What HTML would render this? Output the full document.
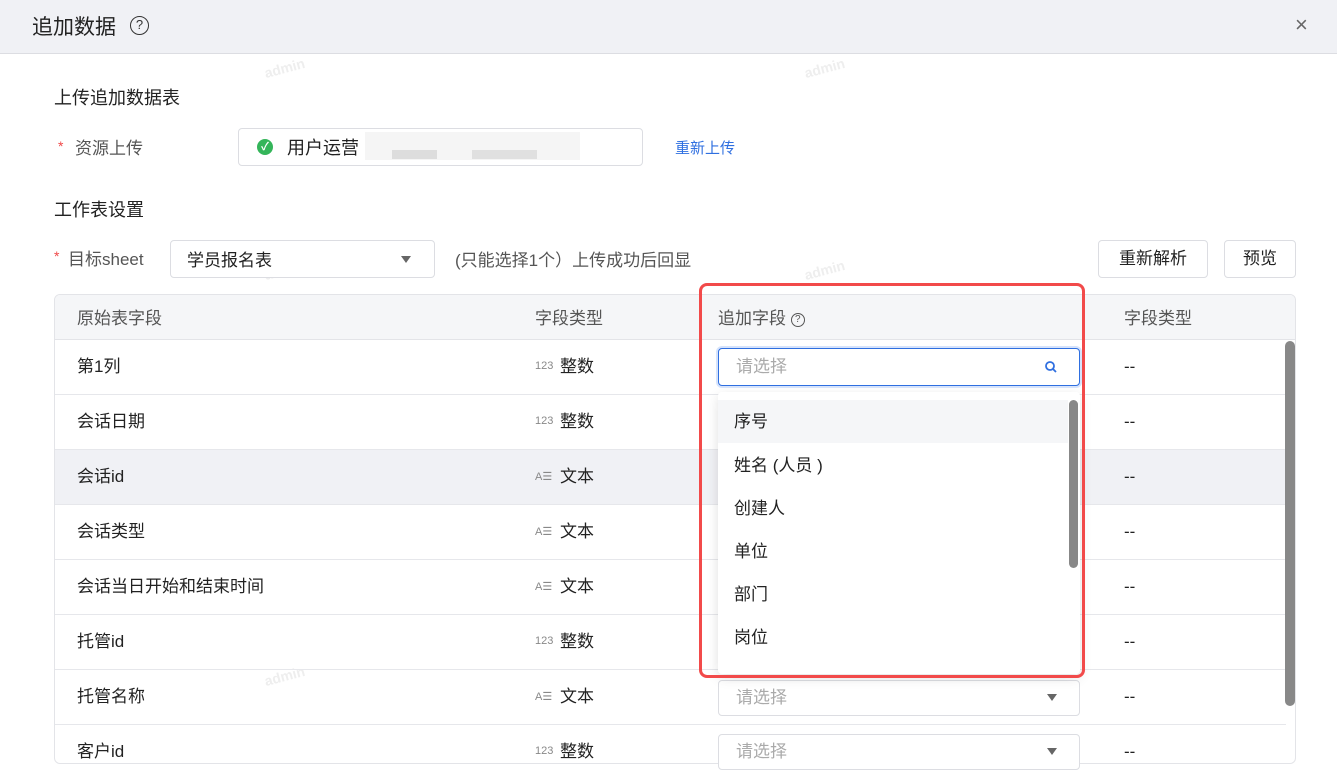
<!DOCTYPE html>
<html><head><meta charset="utf-8"><style>
*{box-sizing:border-box;margin:0;padding:0}
body{width:1337px;height:759px;overflow:hidden;background:#fff;font-family:"Liberation Sans","Noto Sans CJK SC",sans-serif;color:#222;position:relative}
.a{position:absolute;white-space:nowrap}
.hdr{left:0;top:0;width:1337px;height:54px;background:#f0f1f5;border-bottom:1px solid #dcdde2}
.lbl{font-size:17px;color:#555}
.star{color:#f04848;font-size:14px}
.box{border:1px solid #dcdde2;border-radius:4px;background:#fff}
.btn{border:1px solid #dcdde2;border-radius:4px;background:#fff;font-size:17px;color:#222;text-align:center;line-height:36px}
.tbl{left:54px;top:294px;width:1242px;height:470px;border:1px solid #e3e4e8;border-radius:6px;overflow:hidden}
.th{position:absolute;left:0;top:0;width:100%;height:45px;background:#f5f6f8;border-bottom:1px solid #e3e4e8;font-size:17px;color:#555}
.row{position:absolute;left:0;width:1231px;height:55px;border-bottom:1px solid #e6e7eb;font-size:17px}
.row span{position:absolute;top:12px}
.row span.ti{font-size:11px;color:#888;top:20px}
.row span.d{top:17px}
.sel{border:1px solid #dcdde2;border-radius:4px;background:#fff;font-size:17px;color:#aaa;padding-left:17px;line-height:34px}
.tri{position:absolute;width:0;height:0;border-left:5px solid transparent;border-right:5px solid transparent;border-top:7px solid #666}
.wm{font-size:14px;color:#eee;transform:rotate(-15deg);font-weight:bold}
.it{position:absolute;left:16px;font-size:17px;color:#222}
</style></head><body>
<div class="a hdr"></div>
<div class="a" style="left:32px;top:11px;font-size:21px;color:#222">追加数据</div>
<div class="a" style="left:130px;top:16px;width:19px;height:19px;border:1.6px solid #333;border-radius:50%;font-size:13px;text-align:center;line-height:16px;color:#333">?</div>
<div class="a" style="left:1295px;top:12px;font-size:22px;color:#666">×</div>

<div class="a wm" style="left:264px;top:60px">admin</div>
<div class="a wm" style="left:804px;top:60px">admin</div>
<div class="a wm" style="left:264px;top:262px">admin</div>
<div class="a wm" style="left:804px;top:262px">admin</div>
<div class="a wm" style="left:264px;top:466px">admin</div>
<div class="a wm" style="left:264px;top:668px">admin</div>

<div class="a" style="left:54px;top:84px;font-size:18px">上传追加数据表</div>
<div class="a star" style="left:58px;top:138px">*</div>
<div class="a lbl" style="left:75px;top:134px">资源上传</div>
<div class="a box" style="left:238px;top:128px;width:405px;height:38px"></div>
<div class="a" style="left:257px;top:139px;width:16px;height:16px;border-radius:50%;background:#34b55a;color:#fff;font-size:11px;text-align:center;line-height:16px;font-weight:bold">✓</div>
<div class="a" style="left:287px;top:134px;font-size:18px">用户运营</div>
<div class="a" style="left:365px;top:132px;width:215px;height:28px;background:#f5f5f5"></div>
<div class="a" style="left:392px;top:150px;width:45px;height:9px;background:#ddd"></div>
<div class="a" style="left:472px;top:150px;width:65px;height:9px;background:#e0e0e0"></div>
<div class="a" style="left:675px;top:137px;font-size:15px;color:#2f6fe0">重新上传</div>

<div class="a" style="left:54px;top:196px;font-size:18px">工作表设置</div>
<div class="a star" style="left:54px;top:248px">*</div>
<div class="a lbl" style="left:68px;top:245px">目标sheet</div>
<div class="a box" style="left:170px;top:240px;width:265px;height:38px"></div>
<div class="a" style="left:187px;top:246px;font-size:17px">学员报名表</div>
<div class="tri" style="left:401px;top:256px"></div>
<div class="a" style="left:455px;top:246px;font-size:17px;color:#555">(只能选择1个）上传成功后回显</div>
<div class="a btn" style="left:1098px;top:240px;width:110px;height:38px">重新解析</div>
<div class="a btn" style="left:1224px;top:240px;width:72px;height:38px">预览</div>

<div class="a tbl">
 <div class="th"><span class="a" style="left:22px;top:9px">原始表字段</span><span class="a" style="left:480px;top:9px">字段类型</span><span class="a" style="left:663px;top:9px">追加字段 <span style="display:inline-block;width:14px;height:14px;border:1.3px solid #555;border-radius:50%;font-size:10px;text-align:center;line-height:12px;vertical-align:2px">?</span></span><span class="a" style="left:1069px;top:9px">字段类型</span></div>
 <div class="row" style="top:45px"><span style="left:22px">第1列</span><span class="ti" style="left:480px">123</span><span style="left:505px">整数</span><span class="d" style="left:1069px">--</span></div>
 <div class="row" style="top:100px"><span style="left:22px">会话日期</span><span class="ti" style="left:480px">123</span><span style="left:505px">整数</span><span class="d" style="left:1069px">--</span></div>
 <div class="row" style="top:155px;background:#f0f1f5"><span style="left:22px">会话id</span><span class="ti" style="left:480px">A☰</span><span style="left:505px">文本</span><span class="d" style="left:1069px">--</span></div>
 <div class="row" style="top:210px"><span style="left:22px">会话类型</span><span class="ti" style="left:480px">A☰</span><span style="left:505px">文本</span><span class="d" style="left:1069px">--</span></div>
 <div class="row" style="top:265px"><span style="left:22px">会话当日开始和结束时间</span><span class="ti" style="left:480px">A☰</span><span style="left:505px">文本</span><span class="d" style="left:1069px">--</span></div>
 <div class="row" style="top:320px"><span style="left:22px">托管id</span><span class="ti" style="left:480px">123</span><span style="left:505px">整数</span><span class="d" style="left:1069px">--</span></div>
 <div class="row" style="top:375px"><span style="left:22px">托管名称</span><span class="ti" style="left:480px">A☰</span><span style="left:505px">文本</span><span class="d" style="left:1069px">--</span></div>
 <div class="row" style="top:430px"><span style="left:22px">客户id</span><span class="ti" style="left:480px">123</span><span style="left:505px">整数</span><span class="d" style="left:1069px">--</span></div>
 <div class="a" style="left:1230px;top:46px;width:10px;height:365px;background:#888;border-radius:5px"></div>
</div>

<div class="a sel" style="left:718px;top:680px;width:362px;height:36px">请选择</div>
<div class="tri" style="left:1047px;top:694px"></div>
<div class="a sel" style="left:718px;top:734px;width:362px;height:36px">请选择</div>
<div class="tri" style="left:1047px;top:748px"></div>

<div class="a" style="left:718px;top:392px;width:362px;height:282px;background:#fff;box-shadow:0 4px 12px rgba(0,0,0,.12);border-radius:4px;overflow:hidden">
 <div class="a" style="left:0;top:8px;width:350px;height:43px;background:#f5f6f8"></div>
 <div class="it" style="top:15px">序号</div>
 <div class="it" style="top:59px">姓名 (人员 )</div>
 <div class="it" style="top:102px">创建人</div>
 <div class="it" style="top:145px">单位</div>
 <div class="it" style="top:188px">部门</div>
 <div class="it" style="top:231px">岗位</div>
 <div class="a" style="left:351px;top:8px;width:9px;height:168px;background:#888;border-radius:5px"></div>
</div>
<div class="a" style="left:718px;top:348px;width:362px;height:38px;border:1.5px solid #2f6fe0;border-radius:4px;background:#fff;box-shadow:0 0 0 2px #d6e3fb;font-size:17px;color:#aaa;padding-left:17px;line-height:35px">请选择</div>
<svg class="a" style="left:1044px;top:360px" width="14" height="14" viewBox="0 0 14 14"><circle cx="6" cy="6" r="4" fill="none" stroke="#2f6fe0" stroke-width="1.8"/><path d="M9 9l3 3" stroke="#2f6fe0" stroke-width="1.8"/></svg>

<div class="a" style="left:699px;top:283px;width:386px;height:395px;border:3.5px solid #f24a4a;border-radius:8px"></div>
</body></html>
